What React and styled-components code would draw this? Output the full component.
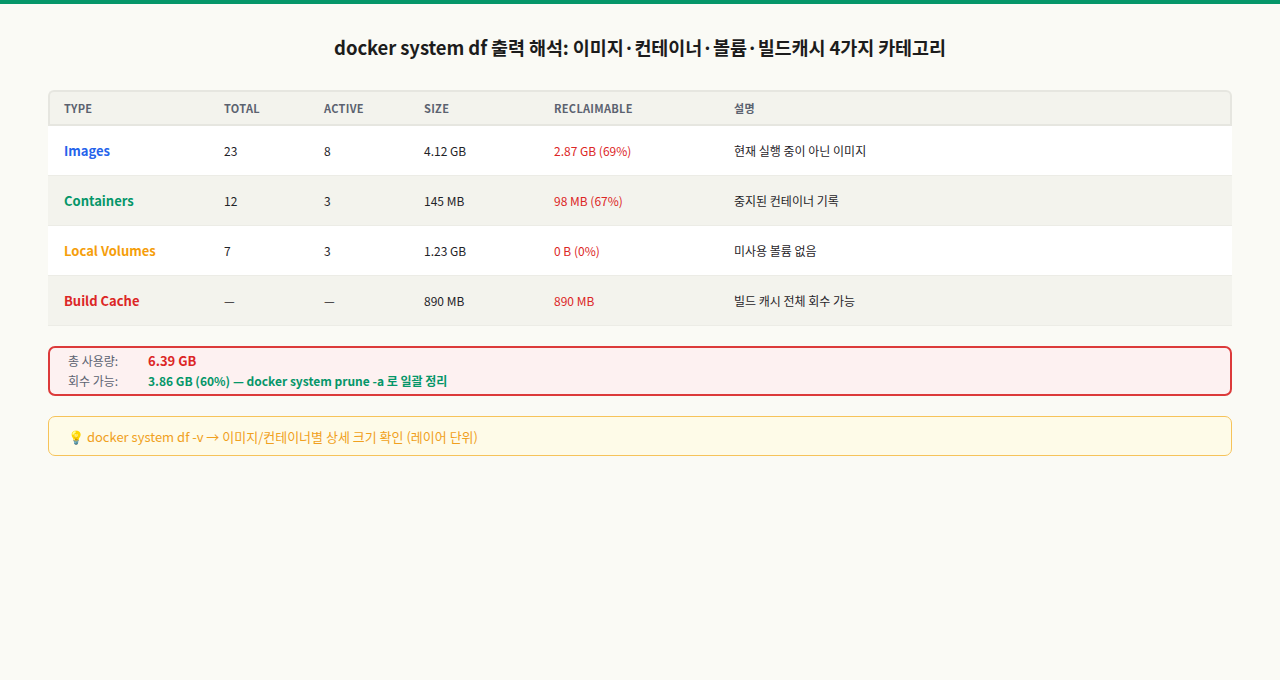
import React from "react";
import styled, { createGlobalStyle } from "styled-components";

const Global = createGlobalStyle`
  html, body { margin: 0; background: #fafaf5; }
  body { font-family: "Noto Sans CJK KR", "Noto Sans", sans-serif; color: #1f2328; }
  * { box-sizing: border-box; }
`;

const TopBar = styled.div`height: 4px; background: #059669;`;
const Page = styled.div`padding: 0 48px;`;
const Title = styled.h1`
  margin: 0; padding: 30px 0 0; height: 56px;
  text-align: center; font-size: 18.5px; font-weight: 700; color: #1c1c1c; line-height: 26px;
  letter-spacing: -0.1px;
`;
const Table = styled.div`
  margin-top: 30px; display: grid;
  grid-template-columns: 160px 100px 100px 130px 180px 1fr;
`;
const Head = styled.div`
  display: contents;
  & > div {
    height: 36px; background: #f3f3ed;
    border-top: 2px solid #e6e6e0; border-bottom: 2px solid #e6e6e0;
    display: flex; align-items: center; padding-left: 16px;
    font-size: 11px; font-weight: 700; color: #5b6270; letter-spacing: 0.3px;
  }
  & > div:first-child { border-left: 2px solid #e6e6e0; border-top-left-radius: 6px; padding-left: 14px; }
  & > div:last-child { border-right: 2px solid #e6e6e0; border-top-right-radius: 6px; }
`;
const Cell = styled.div`
  height: 50px; display: flex; align-items: center; padding-left: 16px;
  font-size: 12px; color: ${p => p.$color || "#1f2328"};
  font-weight: ${p => (p.$bold ? 700 : 400)};
  ${p => p.$bold && "font-size: 13px;"}
  background: ${p => (p.$alt ? "#f3f3ed" : "#ffffff")};
  border-bottom: 1px solid #ecece6;
`;
const Summary = styled.div`
  margin-top: 20px; height: 50px;
  border: 2px solid #dc3a3a; border-radius: 7px; background: #fdf1f1;
  padding: 0 0 0 18px; display: grid; grid-template-columns: 80px 1fr;
  align-content: center; row-gap: 2px; font-size: 12px; line-height: 18px;
`;
const Label = styled.span`color: #5b6270;`;
const Val = styled.span`font-weight: 700; color: ${p => p.$color}; font-size: ${p => p.$size || "12px"};`;
const Tip = styled.div`
  margin-top: 20px; height: 40px;
  border: 1.5px solid #f6c35a; border-radius: 7px; background: #fefbe8;
  padding-left: 19px; display: flex; align-items: center;
  font-size: 13px; color: #f0a020;
`;

const rows = [
  ["Images", "#2563eb", "23", "8", "4.12 GB", "2.87 GB (69%)", "현재 실행 중이 아닌 이미지"],
  ["Containers", "#059669", "12", "3", "145 MB", "98 MB (67%)", "중지된 컨테이너 기록"],
  ["Local Volumes", "#f59e0b", "7", "3", "1.23 GB", "0 B (0%)", "미사용 볼륨 없음"],
  ["Build Cache", "#dc2626", "—", "—", "890 MB", "890 MB", "빌드 캐시 전체 회수 가능"],
];

export default function App() {
  return (
    <>
      <Global />
      <TopBar />
      <Page>
        <Title>docker system df 출력 해석: 이미지·컨테이너·볼륨·빌드캐시 4가지 카테고리</Title>
        <Table>
          <Head>
            {["TYPE", "TOTAL", "ACTIVE", "SIZE", "RECLAIMABLE", "설명"].map(h => <div key={h}>{h}</div>)}
          </Head>
          {rows.map((r, i) => {
            const alt = i % 2 === 1;
            return (
              <React.Fragment key={r[0]}>
                <Cell $alt={alt} $bold $color={r[1]}>{r[0]}</Cell>
                <Cell $alt={alt}>{r[2]}</Cell>
                <Cell $alt={alt}>{r[3]}</Cell>
                <Cell $alt={alt}>{r[4]}</Cell>
                <Cell $alt={alt} $color="#dc2626">{r[5]}</Cell>
                <Cell $alt={alt}>{r[6]}</Cell>
              </React.Fragment>
            );
          })}
        </Table>
        <Summary>
          <Label>총 사용량:</Label>
          <Val $color="#dc2626" $size="13px">6.39 GB</Val>
          <Label>회수 가능:</Label>
          <Val $color="#059669">3.86 GB (60%) — docker system prune -a 로 일괄 정리</Val>
        </Summary>
        <Tip>💡 docker system df -v → 이미지/컨테이너별 상세 크기 확인 (레이어 단위)</Tip>
      </Page>
    </>
  );
}
